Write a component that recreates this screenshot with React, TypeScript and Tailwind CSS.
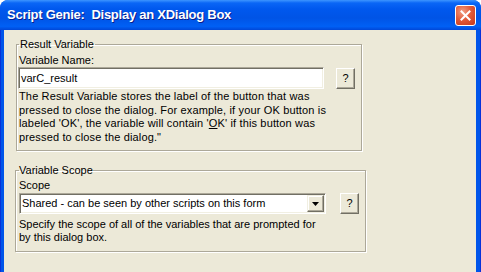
import React from "react";

const font = { fontFamily: '"Liberation Sans", Arial, sans-serif' };

function HelpButton() {
  return (
    <button
      className="w-[19px] h-[21px] shrink-0 bg-[#ece9d8] border border-t-white border-l-white border-r-[#716f64] border-b-[#716f64] shadow-[inset_-1px_-1px_0_#aca899] text-[11px] leading-none text-black flex items-center justify-center"
    >
      ?
    </button>
  );
}

export default function App() {
  return (
    <div className="w-[481px] h-[272px] bg-white overflow-hidden" style={font}>
      <div className="h-full flex flex-col rounded-t-[8px] overflow-hidden bg-[#0054e3]">
        {/* Title bar */}
        <div className="h-[30px] shrink-0 flex items-center pl-[7px] pr-[5px] bg-[linear-gradient(to_bottom,#3d95ff_0%,#0a66f6_10%,#0058ee_30%,#0054e6_60%,#0060f5_88%,#0047d8_100%)]">
          <span className="text-white font-bold text-[13px] tracking-[-0.25px] [text-shadow:1px_1px_0_#0a1e8c]">
            Script Genie:&nbsp; Display an XDialog Box
          </span>
          <div className="ml-auto w-[21px] h-[21px] rounded-[3px] border border-white bg-[radial-gradient(circle_at_35%_30%,#f19f85_0%,#e25b3a_45%,#c4361a_100%)] flex items-center justify-center">
            <svg width="11" height="11" viewBox="0 0 11 11">
              <path d="M1.5 1.5 L9.5 9.5 M9.5 1.5 L1.5 9.5" stroke="white" strokeWidth="2" strokeLinecap="square" />
            </svg>
          </div>
        </div>
        {/* Body */}
        <div className="flex-1 flex bg-[#0055ea] pl-[4px] pr-[5px] shadow-[inset_1px_0_0_#0831d9,inset_-1px_0_0_#0831d9]">
          <div className="flex-1 bg-[#ece9d8] flex flex-col items-start pl-[12px] text-[11px] text-black">
            {/* Group 1 */}
            <fieldset className="mt-[8px] w-[346px] border border-[#aca899] shadow-[1px_1px_0_#fff,inset_1px_1px_0_#fff] pl-[2px] pr-[2px] pb-[6px]">
              <legend className="px-[1px] leading-[13px]">Result Variable</legend>
              <div className="mt-[3px] leading-[13px]">Variable Name:</div>
              <div className="flex items-start">
                <div className="-ml-[1px] w-[306px] h-[22px] bg-white border border-t-[#aca899] border-l-[#aca899] border-r-white border-b-white shadow-[inset_1px_1px_0_#716f64,inset_-1px_-1px_0_#f1efe2] flex items-center pl-[2px]">
                  varC_result
                </div>
                <div className="ml-[12px] mt-[1px]">
                  <HelpButton />
                </div>
              </div>
              <div className="mt-[1px] leading-[13.5px] whitespace-nowrap tracking-[0.15px]">
                The Result Variable stores the label of the button that was
                <br />
                pressed to close the dialog. For example, if your OK button is
                <br />
                labeled 'OK', the variable will contain '<span className="underline">O</span>K' if this button was
                <br />
                pressed to close the dialog."
              </div>
            </fieldset>
            {/* Group 2 */}
            <fieldset className="mt-[13px] -ml-[1px] w-[351px] border border-[#aca899] shadow-[1px_1px_0_#fff,inset_1px_1px_0_#fff] pl-[3px] pr-[2px] pb-[7px]">
              <legend className="px-0 leading-[13px]">Variable Scope</legend>
              <div className="mt-[2px] leading-[13px]">Scope</div>
              <div className="mt-[1px] flex items-start">
                <div className="w-[307px] h-[21px] bg-white border border-t-[#aca899] border-l-[#aca899] border-r-white border-b-white shadow-[inset_1px_1px_0_#716f64,inset_-1px_-1px_0_#f1efe2] flex items-center pl-[2px] pr-[1px]">
                  <span className="flex-1 whitespace-nowrap">Shared - can be seen by other scripts on this form</span>
                  <div className="w-[17px] h-[17px] bg-[#ece9d8] border border-t-[#f1efe2] border-l-[#f1efe2] border-r-[#716f64] border-b-[#716f64] shadow-[inset_-1px_-1px_0_#aca899,inset_1px_1px_0_#fff] flex items-center justify-center">
                    <svg width="7" height="4" viewBox="0 0 7 4">
                      <path d="M0 0 H7 L3.5 4 Z" fill="black" />
                    </svg>
                  </div>
                </div>
                <div className="ml-[14px]">
                  <HelpButton />
                </div>
              </div>
              <div className="mt-[4px] leading-[13px] whitespace-nowrap">
                Specify the scope of all of the variables that are prompted for
                <br />
                by this dialog box.
              </div>
            </fieldset>
          </div>
        </div>
      </div>
    </div>
  );
}
